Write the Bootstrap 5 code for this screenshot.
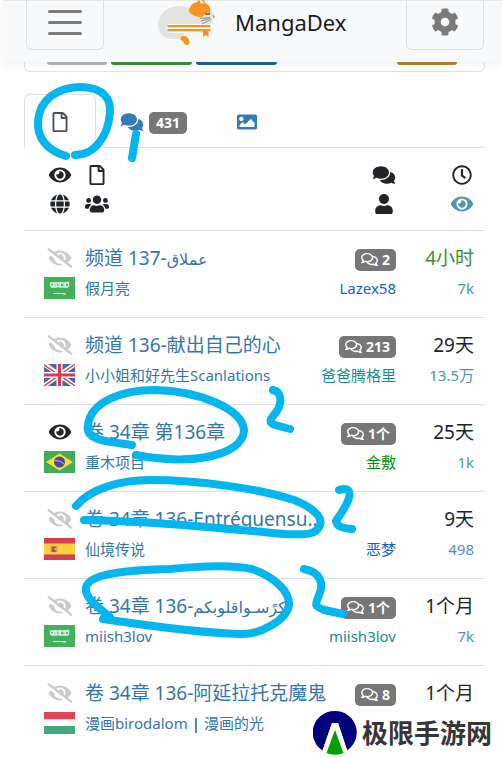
<!DOCTYPE html>
<html lang="zh-CN">
<head>
<meta charset="utf-8">
<meta name="viewport" content="width=device-width, initial-scale=1">
<title>MangaDex</title>
<link href="https://cdn.jsdelivr.net/npm/bootstrap@5.3.0/dist/css/bootstrap.min.css" rel="stylesheet">
<style>
body{font-family:"Noto Sans","Noto Sans CJK SC","DejaVu Sans",sans-serif;color:#212529;background:#fff;overflow-x:hidden}
a{text-decoration:none;color:#3576aa}
.page-shell{margin-left:3px}
.top-bar{background:#f8f9fb;border-top:1px solid #e6e8ea;height:62px;padding:0 18px 0 23px;box-shadow:0 2px 8px rgba(0,0,0,.06);position:relative;z-index:2}
.bar-btn{width:78px;height:49px;background:transparent;border:1px solid #dcdee2;border-top:0;border-radius:0 0 6px 6px;padding:0 0 6px;color:#7b7b7b;display:flex;align-items:center;justify-content:center}
.brand{font-size:22px;line-height:30px;color:#1b1b1b;padding-left:54px;height:42px}
.brand svg{margin-right:19px}
.page-body{padding:0 17px 0 21px}
.info-card{border:1px solid #dee2e6;border-top:0;border-radius:0 0 6px 6px;height:10px;padding:0 27px 0 22px}
.cut-btn{height:3px;border:0;padding:0;border-radius:0 0 4px 4px}
.w-s{width:60px}.w-l{width:81px}
.c-grey{background:#b5b5b5}.c-green{background:#3d8b40}.c-blue{background:#235f91}.c-orange{background:#b47d35}
.chapter-tabs{margin-top:22px}
.chapter-tabs .nav-link{height:54px;padding:2px 23px 0;display:flex;align-items:center;gap:5px;color:#337ab7;border-color:transparent;border-radius:6px 6px 0 0}
.chapter-tabs .nav-link.active{border-color:#dee2e6 #dee2e6 #fff;color:#495057}
.count{background:#777;color:#fff;font-size:14px;font-weight:700;line-height:22px;border-radius:5px;padding:0 6px;display:inline-flex;align-items:center;gap:4px}
.chapter-tabs .count{padding:0 7px;margin-top:2px}
.ico{width:26px;height:20px;fill:currentColor;display:block}
.ico-tab{width:24px}
.ico-s{width:17px;height:15px;fill:currentColor}
.chapters{table-layout:fixed;width:100%;white-space:nowrap}
.chapters tr{border-bottom:1px solid #dee2e6}
.chapters tbody tr:last-child{border-bottom:0}
.chapters th{padding:12px 0 12px;font-weight:400}
.chapters td{padding:12px 0 14px}
.chapters th>div{height:29px;display:flex;align-items:center}
.chapters td>div{height:30px;display:flex;align-items:center}
.chapters td>.tag-line{padding-top:3px}
.col-a{width:61px}.col-c{width:78px}.col-d{width:89px}
.chapters .cell-a{padding-left:20px;padding-right:10px}
.chapters .cell-d{padding-right:11px}
.cell-a>div{justify-content:center}
.cell-c>div,.cell-d>div{justify-content:flex-end}
.l1{font-size:19px}
.l2{font-size:15px}
.arabic{font-size:16px}
.flag{width:31px;height:22px;display:block}
.unread{color:#cbcbcb}
.t-fresh{color:#3d8f40}.t-views{color:#4c97ae}
.chapters .u-blue{color:#0a63cf}.chapters .u-teal{color:#148f8f}.chapters .u-green{color:#078f07}
.marker{position:absolute;left:0;top:0;width:100%;pointer-events:none;z-index:3}
.stamp{position:absolute;right:10px;bottom:2px;z-index:4;font-size:26px;line-height:40px;font-weight:600;color:#363636;gap:5px}
</style>
</head>
<body>
<svg width="0" height="0" class="position-absolute" aria-hidden="true">
<symbol id="eye" viewBox="0 0 576 512"><path d="M572.52 241.4C518.29 135.59 410.93 64 288 64S57.68 135.64 3.48 241.41a32.35 32.35 0 0 0 0 29.19C57.71 376.41 165.07 448 288 448s230.32-71.64 284.52-177.41a32.35 32.35 0 0 0 0-29.19zM288 400a144 144 0 1 1 144-144 143.93 143.93 0 0 1-144 144zm0-240a95.31 95.31 0 0 0-25.31 3.79 47.85 47.85 0 0 1-66.9 66.9A95.78 95.78 0 1 0 288 160z"/></symbol>
<symbol id="eye-slash" viewBox="0 0 640 512"><path d="M320 400c-75.85 0-137.25-58.71-142.9-133.11L72.2 185.82c-13.79 17.3-26.48 35.59-36.72 55.59a32.35 32.35 0 0 0 0 29.19C89.71 376.41 197.07 448 320 448c26.91 0 52.87-4 77.89-10.46L346 397.39a144.13 144.13 0 0 1-26 2.61zm313.82 58.1l-110.55-85.44a331.25 331.25 0 0 0 81.25-102.07 32.35 32.35 0 0 0 0-29.19C550.29 135.59 442.93 64 320 64a308.15 308.15 0 0 0-147.32 37.7L45.46 3.37A16 16 0 0 0 23 6.18L3.37 31.45A16 16 0 0 0 6.18 53.9l588.36 454.73a16 16 0 0 0 22.46-2.81l19.64-25.27a16 16 0 0 0-2.82-22.45zm-183.72-142l-39.3-30.38A94.75 94.75 0 0 0 416 256a94.76 94.76 0 0 0-121.31-92.21A47.65 47.65 0 0 1 304 192a46.64 46.64 0 0 1-1.54 10l-73.61-56.89A142.31 142.31 0 0 1 320 112a143.92 143.92 0 0 1 144 144c0 21.63-5.29 41.79-13.9 60.11z"/></symbol>
<symbol id="file" viewBox="0 0 384 512"><path d="M369.9 97.9L286 14C277 5 264.8-.1 252.1-.1H48C21.5 0 0 21.5 0 48v416c0 26.5 21.5 48 48 48h288c26.5 0 48-21.5 48-48V131.9c0-12.7-5.1-25-14.1-34zM332.1 128H256V51.9l76.1 76.1zM48 464V48h160v104c0 13.3 10.7 24 24 24h104v288H48z"/></symbol>
<symbol id="comments" viewBox="0 0 576 512"><path d="M416 192c0-88.4-93.1-160-208-160S0 103.6 0 192c0 34.3 14.1 65.9 38 92-13.4 30.2-35.5 54.2-35.8 54.5-2.2 2.3-2.8 5.7-1.5 8.7S4.8 352 8 352c36.6 0 66.9-12.3 88.7-25 32.2 15.7 70.3 25 111.3 25 114.9 0 208-71.6 208-160zm122 220c23.9-26 38-57.7 38-92 0-66.9-53.5-124.2-129.3-148.1.9 6.6 1.3 13.3 1.3 20.1 0 105.9-107.7 192-240 192-10.8 0-21.3-.8-31.7-1.9C207.8 439.6 281.8 480 368 480c41 0 79.1-9.2 111.3-25 21.8 12.7 52.1 25 88.7 25 3.2 0 6.1-1.9 7.3-4.8 1.3-2.9.7-6.3-1.5-8.7-.3-.3-22.4-24.2-35.8-54.5z"/></symbol>
<symbol id="comments-o" viewBox="0 0 576 512"><path d="M532 386.2c27.5-27.1 44-61.1 44-98.2 0-80-76.5-146.1-176.2-157.9C368.3 72.5 294.3 32 208 32 93.1 32 0 103.6 0 192c0 37 16.5 71 44 98.2-15.3 30.7-37.3 54.5-37.7 54.9-6.3 6.7-8.1 16.5-4.4 25 3.6 8.5 12 14 21.2 14 53.5 0 96.7-20.2 125.2-38.8 9.2 2.1 18.7 3.7 28.4 4.9C208.1 407.6 281.8 448 368 448c20.8 0 40.8-2.4 59.8-6.8C456.3 459.7 499.4 480 553 480c9.2 0 17.5-5.5 21.2-14 3.6-8.5 1.9-18.3-4.4-25-.4-.3-22.5-24.1-37.8-54.8zm-392.8-92.3L122.1 305c-14.1 9.1-28.5 16.3-43.1 21.4 2.7-4.7 5.4-9.7 8-14.8l15.5-31.1L77.7 256C64.2 242.6 48 220.7 48 192c0-60.7 73.3-112 160-112s160 51.3 160 112-73.3 112-160 112c-16.5 0-33-1.9-49-5.6l-19.8-4.5zM498.3 352l-24.7 24.4 15.5 31.1c2.6 5.1 5.3 10.1 8 14.8-14.6-5.1-29-12.3-43.1-21.4l-17.1-11.1-19.9 4.6c-16 3.7-32.5 5.6-49 5.6-54 0-102.2-20.1-131.3-49.7C338 339.5 416 272.9 416 192c0-3.4-.4-6.7-.7-10C479.7 196.5 528 238.8 528 288c0 28.7-16.2 50.6-29.7 64z"/></symbol>
<symbol id="users" viewBox="0 0 640 512"><path d="M96 224c35.3 0 64-28.7 64-64s-28.7-64-64-64-64 28.7-64 64 28.7 64 64 64zm448 0c35.3 0 64-28.7 64-64s-28.7-64-64-64-64 28.7-64 64 28.7 64 64 64zm32 32h-64c-17.6 0-33.5 7.1-45.1 18.6 40.3 22.1 68.9 62 75.1 109.4h66c17.7 0 32-14.3 32-32v-32c0-35.3-28.7-64-64-64zm-256 0c61.9 0 112-50.1 112-112S381.9 32 320 32 208 82.1 208 144s50.1 112 112 112zm76.8 32h-8.3c-20.8 10-43.9 16-68.5 16s-47.6-6-68.5-16h-8.3C179.6 288 128 339.6 128 403.2V432c0 26.5 21.5 48 48 48h288c26.5 0 48-21.5 48-48v-28.8c0-63.6-51.6-115.2-115.2-115.2zm-223.7-13.4C161.5 263.1 145.6 256 128 256H64c-35.3 0-64 28.7-64 64v32c0 17.7 14.3 32 32 32h65.9c6.3-47.4 34.9-87.3 75.2-109.4z"/></symbol>
<symbol id="user" viewBox="0 0 448 512"><path d="M224 256c70.7 0 128-57.3 128-128S294.7 0 224 0 96 57.3 96 128s57.3 128 128 128zm89.6 32h-16.7c-22.2 10.2-46.9 16-72.9 16s-50.6-5.8-72.9-16h-16.7C60.2 288 0 348.2 0 422.4V464c0 26.5 21.5 48 48 48h352c26.5 0 48-21.5 48-48v-41.6c0-74.2-60.2-134.4-134.4-134.4z"/></symbol>
<symbol id="globe" viewBox="0 0 496 512"><path d="M336.5 160C322 70.7 287.8 8 248 8s-74 62.7-88.5 152h177zM152 256c0 22.2 1.2 43.5 3.3 64h185.3c2.1-20.5 3.3-41.8 3.3-64s-1.2-43.5-3.3-64H155.3c-2.1 20.5-3.3 41.8-3.3 64zm324.7-96c-28.6-67.9-86.5-120.4-158-141.6 24.4 33.8 41.2 84.7 50 141.6h108zM177.2 18.4C105.8 39.6 47.8 92.1 19.3 160h108c8.7-56.9 25.5-107.8 49.9-141.6zM487.4 192H372.7c2.1 21 3.3 42.5 3.3 64s-1.2 43-3.3 64h114.6c5.5-20.5 8.6-41.8 8.6-64s-3.1-43.5-8.5-64zM120 256c0-21.5 1.2-43 3.3-64H8.6C3.2 212.5 0 233.8 0 256s3.2 43.5 8.6 64h114.6c-2-21-3.2-42.5-3.2-64zm39.5 96c14.5 89.3 48.7 152 88.5 152s74-62.7 88.5-152h-177zm159.3 141.6c71.4-21.2 129.4-73.7 158-141.6h-108c-8.8 56.9-25.6 107.8-50 141.6zM19.3 352c28.6 67.9 86.5 120.4 158 141.6-24.4-33.8-41.2-84.7-50-141.6h-108z"/></symbol>
<symbol id="clock" viewBox="0 0 512 512"><path d="M256 8C119 8 8 119 8 256s111 248 248 248 248-111 248-248S393 8 256 8zm0 448c-110.5 0-200-89.5-200-200S145.5 56 256 56s200 89.5 200 200-89.5 200-200 200zm61.8-104.4l-84.9-61.7c-3.1-2.3-4.9-5.9-4.9-9.7V116c0-6.6 5.4-12 12-12h32c6.6 0 12 5.4 12 12v141.7l66.8 48.6c5.4 3.9 6.5 11.4 2.6 16.8L334.6 349c-3.9 5.3-11.4 6.5-16.8 2.6z"/></symbol>
<symbol id="image" viewBox="0 0 512 512"><path d="M464 448H48c-26.51 0-48-21.49-48-48V112c0-26.51 21.49-48 48-48h416c26.51 0 48 21.49 48 48v288c0 26.51-21.49 48-48 48zM112 120c-30.928 0-56 25.072-56 56s25.072 56 56 56 56-25.072 56-56-25.072-56-56-56zM64 384h384V272l-87.515-87.515c-4.686-4.686-12.284-4.686-16.971 0L208 320l-55.515-55.515c-4.686-4.686-12.284-4.686-16.971 0L64 336v48z"/></symbol>
<symbol id="cog" viewBox="0 0 512 512"><path d="M487.4 315.7l-42.6-24.6c4.3-23.2 4.3-47 0-70.2l42.6-24.6c4.9-2.8 7.1-8.6 5.5-14-11.1-35.6-30-67.8-54.7-94.6-3.8-4.1-10-5.1-14.8-2.3L380.8 110c-17.9-15.4-38.5-27.3-60.8-35.1V25.8c0-5.6-3.9-10.5-9.4-11.7-36.7-8.2-74.3-7.8-109.2 0-5.5 1.2-9.4 6.1-9.4 11.7V75c-22.2 7.9-42.8 19.8-60.8 35.1L88.7 85.5c-4.9-2.8-11-1.9-14.8 2.3-24.7 26.7-43.6 58.9-54.7 94.6-1.7 5.4.6 11.2 5.5 14L67.3 221c-4.3 23.2-4.3 47 0 70.2l-42.6 24.6c-4.9 2.8-7.1 8.6-5.5 14 11.1 35.6 30 67.8 54.7 94.6 3.8 4.1 10 5.1 14.8 2.3l42.6-24.6c17.9 15.4 38.5 27.3 60.8 35.1v49.2c0 5.6 3.9 10.5 9.4 11.7 36.7 8.2 74.3 7.8 109.2 0 5.5-1.2 9.4-6.1 9.4-11.7v-49.2c22.2-7.9 42.8-19.8 60.8-35.1l42.6 24.6c4.9 2.8 11 1.9 14.8-2.3 24.7-26.7 43.6-58.9 54.7-94.6 1.5-5.5-.7-11.3-5.6-14.1zM256 336c-44.1 0-80-35.9-80-80s35.9-80 80-80 80 35.9 80 80-35.9 80-80 80z"/></symbol>
<symbol id="sa" viewBox="0 0 31 22"><path fill="#43b05c" d="M0 0h31v22H0z"/><path fill="none" stroke="#d9f0df" stroke-width="1.300" d="M6.500 5.500v3.500h3V5.500M11 5v5M12.500 6v3.500h2.500V6M16.500 5v5.500M18 6h2v4h-2M21.500 5v5M23 5.500h1.500V10M7 10h6M15 10h9M7 6h17"/><path fill="none" stroke="#c5e8cd" d="M9 16.500h13M19 17.200h3"/></symbol>
<symbol id="gb" viewBox="0 0 31 22"><path fill="#4a63ad" d="M0 0h31v22H0z"/><path stroke="#fff" stroke-width="4.600" d="M0 0l31 22M31 0L0 22"/><path stroke="#dd4556" stroke-width="1.500" d="M0 .8l31 21M31 .2L0 22"/><path stroke="#fff" stroke-width="6" d="M15.500 0v22M0 11h31"/><path stroke="#d93a4c" stroke-width="3" d="M15.500 0v22M0 11h31"/></symbol>
<symbol id="br" viewBox="0 0 31 22"><path fill="#43ab5c" d="M0 0h31v22H0z"/><path fill="#fcdc35" d="M15.500 2.500L29 11l-13.500 8.500L2 11z"/><circle cx="15.500" cy="11" r="5.500" fill="#4b4897"/><path fill="none" stroke="#b9bbd8" d="M10.300 9.600q6-.8 10.200 3.700"/></symbol>
<symbol id="es" viewBox="0 0 31 22"><path fill="#d63f51" d="M0 0h31v22H0z"/><path fill="#fbd13c" d="M0 5.500h31v11H0z"/><path fill="#c99b62" d="M6.500 8h7v6h-7z"/><path fill="#b6503f" d="M8 8.500h4v5l-2 1-2-1z"/><circle cx="11.500" cy="11" r="1.300" fill="#dda1a0"/></symbol>
<symbol id="hu" viewBox="0 0 31 22"><path fill="#fff" d="M0 0h31v22H0z"/><path fill="#dc4655" d="M0 0h31v7.300H0z"/><path fill="#45a87c" d="M0 14h31v8H0z"/></symbol>
</svg>

<div class="page-shell">
<header class="top-bar d-flex align-items-start">
  <button class="bar-btn" type="button" aria-label="菜单"><svg width="34" height="25" viewBox="0 0 34 25" stroke="currentColor" stroke-width="3" stroke-linecap="round"><path d="M1.500 1.500h31M1.500 12.500h31M1.500 23.500h31"/></svg></button>
  <a class="brand d-flex align-items-center flex-grow-1" href="#">
    <svg width="58" height="48" viewBox="0 -1 58 48" aria-hidden="true">
      <path fill="#e3e3e3" d="M25 40H13C4 39 0 33 0 25 1 13 11 6 23 7l11 2 13-3c6 2 9 7 9 12l-2 5-2 3-2 8H26z"/>
      <path fill="#f8f9fb" d="M12 25h41v9H12c-5 0-5-9 0-9z"/>
      <path fill="#f7941e" d="M9.500 26h43v2.200h-43zM9.500 30h43v2.200h-43zM45 32h5.500v6l-2.700-2-2.800 2z"/>
      <path fill="#f7941e" d="M31 13c0-5 3-9 8-10l4-4c3 1 4 3 4 5 5 2 6 5 5 10-4-1-5 2-8 4-6 0-10-2-13-5z"/>
      <path fill="#fff" d="M41 0c2 1 4 2 5 4l-3 1z"/>
      <path fill="none" stroke="#3c2c22" stroke-width="1.200" d="M47.500 14.500q2 1.500 4.500 0"/>
      <path fill="none" stroke="#777" stroke-width=".8" d="M42 19.500l10-1M43 22l9-2.500M44 25l9-4.500"/>
      <path fill="#f06fa0" d="M55 16l2 1-1.500 3z"/>
      <path fill="#f7941e" d="M23 38c3-2 7-1 8 3 1 3 0 5-2 5-4 0-2-4-5-4-2-1-2-3-1-4z"/>
    </svg>
    <span>MangaDex</span>
  </a>
  <button class="bar-btn" type="button" aria-label="设置"><svg width="28" height="28" fill="currentColor"><use href="#cog"/></svg></button>
</header>

<main class="page-body">
  <div class="info-card d-flex">
    <button class="cut-btn w-s c-grey" type="button" aria-label="评分"></button>
    <button class="cut-btn w-l c-green ms-1" type="button" aria-label="关注"></button>
    <button class="cut-btn w-l c-blue ms-1" type="button" aria-label="阅读"></button>
    <button class="cut-btn w-s c-orange ms-auto" type="button" aria-label="举报"></button>
  </div>

  <ul class="nav nav-tabs chapter-tabs">
    <li class="nav-item"><a class="nav-link active" href="#" aria-label="章节"><svg class="ico ico-tab"><use href="#file"/></svg></a></li>
    <li class="nav-item"><a class="nav-link" href="#"><svg class="ico ico-tab"><use href="#comments"/></svg><span class="count">431</span></a></li>
    <li class="nav-item"><a class="nav-link" href="#" aria-label="封面"><svg class="ico ico-tab"><use href="#image"/></svg></a></li>
  </ul>

  <table class="chapters">
    <colgroup><col class="col-a"><col><col class="col-c"><col class="col-d"></colgroup>
    <thead><tr>
      <th class="cell-a"><div><svg class="ico"><use href="#eye"/></svg></div><div><svg class="ico"><use href="#globe"/></svg></div></th>
      <th><div><svg class="ico ico-tab"><use href="#file"/></svg></div><div><svg class="ico ico-tab"><use href="#users"/></svg></div></th>
      <th class="cell-c"><div><svg class="ico ico-tab"><use href="#comments"/></svg></div><div><svg class="ico ico-tab"><use href="#user"/></svg></div></th>
      <th class="cell-d"><div><svg class="ico ico-tab"><use href="#clock"/></svg></div><div class="t-views"><svg class="ico ico-tab"><use href="#eye"/></svg></div></th>
    </tr></thead>
    <tbody>
    <tr>
      <td class="cell-a"><div class="unread"><svg class="ico"><use href="#eye-slash"/></svg></div><div><svg class="flag"><use href="#sa"/></svg></div></td>
      <td><div class="l1"><a href="#">频道 137-<span class="arabic">عملاق</span></a></div><div class="l2"><a href="#">假月亮</a></div></td>
      <td class="cell-c"><div class="tag-line"><a class="count" href="#"><svg class="ico-s"><use href="#comments-o"/></svg>2</a></div><div class="l2"><a class="u-blue" href="#">Lazex58</a></div></td>
      <td class="cell-d"><div class="l1 t-fresh">4小时</div><div class="l2 t-views">7k</div></td>
    </tr>
    <tr>
      <td class="cell-a"><div class="unread"><svg class="ico"><use href="#eye-slash"/></svg></div><div><svg class="flag"><use href="#gb"/></svg></div></td>
      <td><div class="l1"><a href="#">频道 136-献出自己的心</a></div><div class="l2"><a href="#">小小姐和好先生Scanlations</a></div></td>
      <td class="cell-c"><div class="tag-line"><a class="count" href="#"><svg class="ico-s"><use href="#comments-o"/></svg>213</a></div><div class="l2"><a class="u-teal" href="#">爸爸腾格里</a></div></td>
      <td class="cell-d"><div class="l1">29天</div><div class="l2 t-views">13.5万</div></td>
    </tr>
    <tr>
      <td class="cell-a"><div><svg class="ico"><use href="#eye"/></svg></div><div><svg class="flag"><use href="#br"/></svg></div></td>
      <td><div class="l1"><a href="#">卷 34章 第136章</a></div><div class="l2"><a href="#">重木项目</a></div></td>
      <td class="cell-c"><div class="tag-line"><a class="count" href="#"><svg class="ico-s"><use href="#comments-o"/></svg>1个</a></div><div class="l2"><a class="u-green" href="#">金敷</a></div></td>
      <td class="cell-d"><div class="l1">25天</div><div class="l2 t-views">1k</div></td>
    </tr>
    <tr>
      <td class="cell-a"><div class="unread"><svg class="ico"><use href="#eye-slash"/></svg></div><div><svg class="flag"><use href="#es"/></svg></div></td>
      <td><div class="l1"><a href="#">卷 34章 136-Entréquensu...</a></div><div class="l2"><a href="#">仙境传说</a></div></td>
      <td class="cell-c"><div class="tag-line"></div><div class="l2"><a class="u-blue" href="#">恶梦</a></div></td>
      <td class="cell-d"><div class="l1">9天</div><div class="l2 t-views">498</div></td>
    </tr>
    <tr>
      <td class="cell-a"><div class="unread"><svg class="ico"><use href="#eye-slash"/></svg></div><div><svg class="flag"><use href="#sa"/></svg></div></td>
      <td><div class="l1"><a href="#">卷 34章 136-<span class="arabic">كرًسـواقلوبكم</span></a></div><div class="l2"><a href="#">miish3lov</a></div></td>
      <td class="cell-c"><div class="tag-line"><a class="count" href="#"><svg class="ico-s"><use href="#comments-o"/></svg>1个</a></div><div class="l2"><a class="u-teal" href="#">miish3lov</a></div></td>
      <td class="cell-d"><div class="l1">1个月</div><div class="l2 t-views">7k</div></td>
    </tr>
    <tr>
      <td class="cell-a"><div class="unread"><svg class="ico"><use href="#eye-slash"/></svg></div><div><svg class="flag"><use href="#hu"/></svg></div></td>
      <td><div class="l1"><a href="#">卷 34章 136-阿延拉托克魔鬼</a></div><div class="l2"><a href="#">漫画birodalom</a><span class="mx-1">|</span><a href="#">漫画的光</a></div></td>
      <td class="cell-c"><div class="tag-line"><a class="count" href="#"><svg class="ico-s"><use href="#comments-o"/></svg>8</a></div><div class="l2"></div></td>
      <td class="cell-d"><div class="l1">1个月</div><div class="l2 t-views"></div></td>
    </tr>
    </tbody>
  </table>
</main>
</div>

<!-- hand-drawn marker strokes -->
<svg class="marker" viewBox="0 0 502 758" fill="none" stroke="#04b6f0" stroke-width="8" stroke-linecap="round" stroke-linejoin="round" aria-hidden="true">
<path d="M66 156C50 151 37 141 38 121C40 99 57 87 82 87C104 88 111 99 110 113C108 136 95 155 75 155"/>
<path d="M136 134L132 158"/>
<path d="M132 445C112 442 84 441 88 425C91 402 121 390 155 390C200 391 242 409 244 430C243 455 194 466 136 455"/>
<path d="M273 390C282 392 282 403 277 411C271 419 267 422 275 425L290 429"/>
<path d="M76 506C90 489 120 480 150 480C200 480 260 489 294 500C312 507 323 517 320 525C316 535 307 535 285 534C220 528 150 521 84 520"/>
<path d="M339 490C348 487 351 491 349 498C346 507 340 515 336 521C337 527 343 528 352 529"/>
<path d="M110 617C98 607 84 598 86 587C90 573 130 570 170 569C200 566 235 565 252 569C275 577 290 592 289 605C287 620 260 635 240 634C200 633 150 626 103 619"/>
<path d="M304 569C321 572 324 584 319 595C315 605 314 606 324 610L343 614"/>
</svg>

<div class="stamp d-flex align-items-center">
  <svg width="44" height="46" viewBox="0 0 44 46" aria-hidden="true"><path fill="#00007c" d="M22 1a21.500 21.500 0 0 1 12 39.500L25 13h-6L9.500 40.500A21.500 21.500 0 0 1 22 1z"/><path fill="#fff" d="M19 13h6l9.500 28h-25z"/><path fill="#00a000" d="M22 20c2 5 5 14 8.500 23q-8.500 3.500-17 0C17 34 20 25 22 20z"/></svg>
  <span>极限手游网</span>
</div>
<script src="https://cdn.jsdelivr.net/npm/bootstrap@5.3.0/dist/js/bootstrap.bundle.min.js"></script>
</body>
</html>
